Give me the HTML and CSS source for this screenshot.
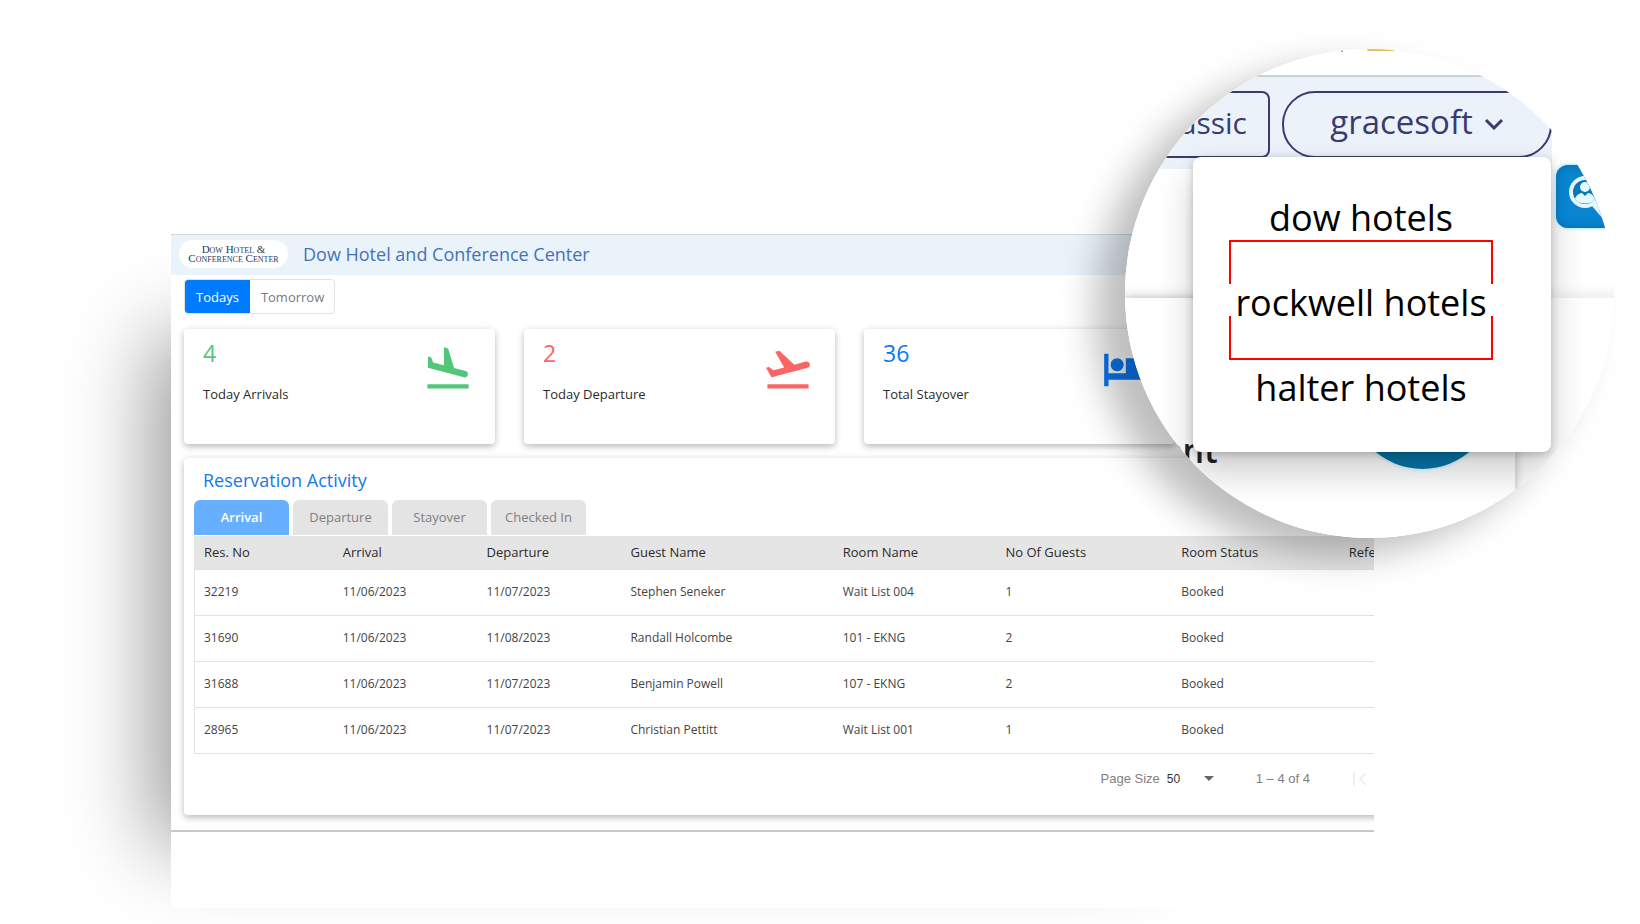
FILE: index.html
```html
<!DOCTYPE html>
<html lang="en">
<head>
<meta charset="utf-8">
<title>Dow Hotel and Conference Center</title>
<link rel="stylesheet" href="styles.css">
</head>
<body>
<main class="stage">
  <div class="backdrop"></div>
  <section class="app">
    <header class="topbar">
      <div class="logo"><span>Dow Hotel &amp;</span><span>Conference Center</span></div>
      <h1 class="title">Dow Hotel and Conference Center</h1>
    </header>
    <div class="toggle">
      <button class="toggle-btn active" type="button">Todays</button>
      <button class="toggle-btn" type="button">Tomorrow</button>
    </div>
    <div class="cards">
      <article class="card green">
        <div><p class="count">4</p><p class="label">Today Arrivals</p></div>
        <svg class="card-icon" viewBox="0 0 24 24" aria-hidden="true"><path d="M2.5 19h19v2h-19zM19.34 15.85c.8.21 1.62-.26 1.84-1.06.21-.8-.26-1.62-1.06-1.84l-5.31-1.42-2.76-9.02L10.12 2v8.28L5.15 8.95l-.93-2.32-1.45-.39v5.17l16.57 4.44z"/></svg>
      </article>
      <article class="card red">
        <div><p class="count">2</p><p class="label">Today Departure</p></div>
        <svg class="card-icon" viewBox="0 0 24 24" aria-hidden="true"><path d="M2.5 19h19v2h-19zM22.07 9.64c-.21-.8-1.04-1.28-1.84-1.06L14.92 10l-6.9-6.43-1.93.51 4.14 7.17-4.97 1.33-1.97-1.54-1.45.39 2.59 4.49c7.45-2 10.51-2.82 16.57-4.44.81-.23 1.28-1.05 1.07-1.84z"/></svg>
      </article>
      <article class="card blue">
        <div><p class="count">36</p><p class="label">Total Stayover</p></div>
        <svg class="card-icon" viewBox="0 0 24 24" aria-hidden="true"><path d="M7 13c1.66 0 3-1.34 3-3S8.66 7 7 7s-3 1.34-3 3 1.34 3 3 3zm12-6h-8v7H3V5H1v15h2v-3h18v3h2v-9c0-2.21-1.79-4-4-4z"/></svg>
      </article>
    </div>
    <section class="panel">
      <h2 class="panel-title">Reservation Activity</h2>
      <div class="tabs">
        <button class="tab active" type="button">Arrival</button>
        <button class="tab" type="button">Departure</button>
        <button class="tab" type="button">Stayover</button>
        <button class="tab" type="button">Checked In</button>
      </div>
      <table class="grid">
        <colgroup><col class="c-res"><col class="c-date"><col class="c-date"><col class="c-guest"><col class="c-room"><col class="c-num"><col class="c-status"><col></colgroup>
        <thead><tr><th>Res. No</th><th>Arrival</th><th>Departure</th><th>Guest Name</th><th>Room Name</th><th>No Of Guests</th><th>Room Status</th><th>Refe</th></tr></thead>
        <tbody>
          <tr><td>32219</td><td>11/06/2023</td><td>11/07/2023</td><td>Stephen Seneker</td><td>Wait List 004</td><td>1</td><td>Booked</td><td></td></tr>
          <tr><td>31690</td><td>11/06/2023</td><td>11/08/2023</td><td>Randall Holcombe</td><td>101 - EKNG</td><td>2</td><td>Booked</td><td></td></tr>
          <tr><td>31688</td><td>11/06/2023</td><td>11/07/2023</td><td>Benjamin Powell</td><td>107 - EKNG</td><td>2</td><td>Booked</td><td></td></tr>
          <tr><td>28965</td><td>11/06/2023</td><td>11/07/2023</td><td>Christian Pettitt</td><td>Wait List 001</td><td>1</td><td>Booked</td><td></td></tr>
        </tbody>
      </table>
      <div class="pager">
        <label for="size">Page Size</label>
        <span class="size-wrap">
          <select id="size" class="size"><option>50</option></select>
          <svg class="caret" viewBox="0 0 10 5" aria-hidden="true"><path d="M0 0h10L5 5z"/></svg>
        </span>
        <span class="range">1 – 4 of 4</span>
        <button class="first" type="button" aria-label="First page"><svg viewBox="0 0 14 14"><path d="M1 0v14M13 1L7 7l6 6"/></svg></button>
      </div>
    </section>
    <hr class="rule">
  </section>

  <div class="lens-shadow"></div>
  <aside class="lens">
    <div class="marks"><i class="mark-gray"></i><i class="mark-gold"></i></div>
    <div class="lens-bar">
      <button class="classic" type="button">classic</button>
      <button class="account" type="button">gracesoft
        <svg viewBox="0 0 20 12" aria-hidden="true"><path d="M2 2l8 8 8-8"/></svg>
      </button>
    </div>
    <div class="lens-sheet"></div>
    <div class="lens-card"><span class="fragment">ent</span><i class="disc"></i></div>
    <ul class="menu">
      <li><a href="#">dow hotels</a></li>
      <li class="picked"><a href="#">rockwell hotels</a></li>
      <li><a href="#">halter hotels</a></li>
    </ul>
    <button class="chat" type="button" aria-label="Chat">
      <svg viewBox="0 0 64 64" aria-hidden="true">
        <circle cx="29" cy="27" r="14" fill="#0877b8" stroke="#e4f8ff" stroke-width="4"/>
        <circle cx="29" cy="22" r="5" fill="#e4f8ff"/>
        <path d="M19 34c1-4 5-6 7-6l3 3 3-3c2 0 6 2 7 6-4 6-16 6-20 0z" fill="#e4f8ff"/>
        <path d="M38 38l12 14" stroke="#e4f8ff" stroke-width="7"/>
      </svg>
    </button>
  </aside>
</main>
</body>
</html>
```
FILE: styles.css
```css
* { box-sizing: border-box; }
body {
  margin: 0;
  background: #fff;
  color: #2b2b2b;
  font-family: "Open Sans", "Noto Sans", sans-serif;
  font-size: 12px;
}
h1, h2, p, ul { margin: 0; padding: 0; font-weight: 400; }
button { font: inherit; color: inherit; background: none; border: 0; padding: 0; cursor: pointer; }

.stage {
  position: relative;
  display: flex;
  min-height: 100vh;
  padding: 234px 266px 16px 171px;
  overflow: hidden;
}
.backdrop {
  position: absolute;
  left: 153px;
  right: 490px;
  top: 335px;
  bottom: 78px;
  background: rgba(0, 0, 0, .4);
  filter: blur(42px);
}
.app {
  position: relative;
  flex: 1;
  min-width: 0;
  overflow: hidden;
  background: #fff;
}

.topbar {
  display: flex;
  align-items: center;
  gap: 15px;
  height: 41px;
  padding: 0 0 2px 8px;
  background: #ebf3fa;
  border-top: 1px solid #d3dae0;
}
.logo {
  display: flex;
  flex-direction: column;
  align-items: center;
  justify-content: center;
  width: 109px;
  height: 28px;
  border-radius: 14px;
  background: #fff;
  color: #1d3c5c;
  font: 11px/9px "Liberation Serif", serif;
  font-variant: small-caps;
  white-space: nowrap;
}
.title { color: #4472b8; font-size: 18px; line-height: 24px; }

.toggle { display: flex; width: max-content; margin: 4px 0 0 13px; border: 1px solid #e2e2e2; border-radius: 4px; overflow: hidden; }
.toggle-btn { height: 33px; padding: 0 10px 0 11px; color: #7a7a7a; font-size: 13px; }
.toggle-btn.active { background: #007bff; color: #fff; padding: 0 11px; }

.cards { display: grid; grid-template-columns: repeat(3, 311px); gap: 29px; margin: 15px 0 0 13px; }
.card {
  display: flex;
  justify-content: space-between;
  height: 115px;
  padding: 10px 21px 0 19px;
  border-radius: 4px;
  background: #fff;
  box-shadow: 0 3px 6px rgba(0, 0, 0, .22), 0 0 8px rgba(0, 0, 0, .07);
}
.count { font-size: 23px; line-height: 28px; }
.label { margin-top: 17px; font-size: 13px; line-height: 20px; }
.card-icon { width: 52px; height: 52px; margin-top: 4px; fill: currentColor; }
.green .count, .green .card-icon { color: #53c779; }
.red .count, .red .card-icon { color: #fd6464; }
.blue .count, .blue .card-icon { color: #0a78f0; }

.panel {
  margin: 14px -20px 0 13px;
  padding: 9px 20px 0 10px;
  height: 357px;
  border-radius: 4px;
  background: #fff;
  box-shadow: 0 3px 6px rgba(0, 0, 0, .22), 0 0 8px rgba(0, 0, 0, .07);
}
.panel-title { padding-left: 9px; color: #1479ea; font-size: 18px; line-height: 26px; }
.tabs { display: flex; gap: 4px; margin-top: 7px; }
.tab { width: 95px; height: 35px; padding-bottom: 2px; border-radius: 6px 6px 0 0; background: #e4e4e4; color: #808080; font-size: 13px; }
.tab.active { background: #67afff; color: #fff; font-weight: 600; }

.grid { width: 100%; margin-top: 1px; table-layout: fixed; border-collapse: collapse; border-left: 1px solid #e4e4e4; }
.grid th, .grid td { padding: 0 0 0 9px; text-align: left; font-weight: 400; white-space: nowrap; border-bottom: 1px solid #e2e2e2; }
.grid th { height: 33px; background: #e5e5e5; font-size: 13px; }
.grid td { height: 46px; padding-bottom: 2px; color: #444; }
.c-res { width: 11.8%; }
.c-date { width: 12.2%; }
.c-guest { width: 18%; }
.c-room { width: 13.8%; }
.c-num { width: 14.9%; }
.c-status { width: 14.2%; }

.pager {
  display: flex;
  align-items: center;
  justify-content: flex-end;
  height: 50px;
  padding-right: 7px;
  color: #808080;
  font: 13px "Liberation Sans", sans-serif;
}
.size-wrap { display: flex; align-items: center; margin-left: 7px; }
.size { width: 37px; padding: 0; border: 0; background: none; color: #333; font: 12px "Liberation Sans", sans-serif; appearance: none; }
.caret { width: 10px; height: 5px; fill: #666; }
.range { margin: 0 43px 0 42px; }
.first { width: 14px; height: 14px; }
.first svg { display: block; fill: none; stroke: #f0f0f0; stroke-width: 2; }
.rule { margin: 15px 0 0; border: 0; border-top: 2px solid #c8c8c8; }

.lens, .lens-shadow {
  position: absolute;
  top: 49px;
  right: 26px;
  width: 489px;
  height: 489px;
  border-radius: 50%;
}
.lens { overflow: hidden; background: #fff; }
.lens-shadow { box-shadow: -30px 18px 36px rgba(0, 0, 0, .26); }
.marks { display: flex; gap: 24px; height: 26px; padding-left: 216px; }
.mark-gray { width: 2px; height: 3px; background: #999; }
.mark-gold { width: 28px; height: 2px; border-radius: 0 0 8px 8px; background: #dfc25c; }
.lens-bar {
  display: flex;
  gap: 12px;
  width: 427px;
  height: 94px;
  padding-top: 14px;
  overflow: hidden;
  background: #ebf2fa;
  border-top: 2px solid #ccd0d5;
}
.classic, .account { flex: none; height: 67px; border: 2px solid #3b3b6e; color: #3b3b6e; }
.classic { width: 145px; padding: 0 21px 4px 0; border-radius: 8px; border-left: 0; font-size: 30px; text-align: right; }
.account { display: flex; align-items: center; justify-content: center; gap: 11px; width: 270px; padding-bottom: 6px; border-radius: 33px; font-size: 33px; }
.account svg { width: 20px; height: 12px; margin-top: 4px; fill: none; stroke: currentColor; stroke-width: 3; }
.lens-sheet { height: 129px; background: linear-gradient(#fff 90%, #f0f0f0); }
.lens-card {
  position: relative;
  width: 390px;
  height: 240px;
  background: #fff;
  box-shadow: 2px 0 8px rgba(0, 0, 0, .2);
}
.fragment { position: absolute; left: 38px; top: 130px; color: #222; font-size: 34px; font-weight: 600; line-height: 44px; }
.disc { position: absolute; left: 225px; top: 26px; width: 145px; height: 145px; border-radius: 50%; background: #0775a8; box-shadow: 0 0 5px #b5ecff; }
.menu {
  position: absolute;
  left: 68px;
  top: 108px;
  width: 358px;
  height: 295px;
  padding: 18px 0 0 36px;
  border-radius: 8px;
  background: #fff;
  box-shadow: 0 20px 36px rgba(0, 0, 0, .2), 0 2px 8px rgba(0, 0, 0, .22);
  list-style: none;
}
.menu li { position: relative; width: 264px; height: 85px; text-align: center; font-size: 36px; line-height: 85px; white-space: nowrap; }
.menu a { color: #000; text-decoration: none; }
.picked::before, .picked::after { content: ""; position: absolute; left: 0; right: 0; height: 42px; border: 2px solid #f00; }
.picked::before { top: -20px; border-bottom: 0; }
.picked::after { bottom: -15px; border-top: 0; }
.chat { position: absolute; left: 431px; top: 116px; width: 64px; height: 63px; border-radius: 12px; background: #0984cf; box-shadow: 0 0 4px #8fd8f5, inset 0 0 10px #046ca8; }
.chat svg { display: block; }
```
